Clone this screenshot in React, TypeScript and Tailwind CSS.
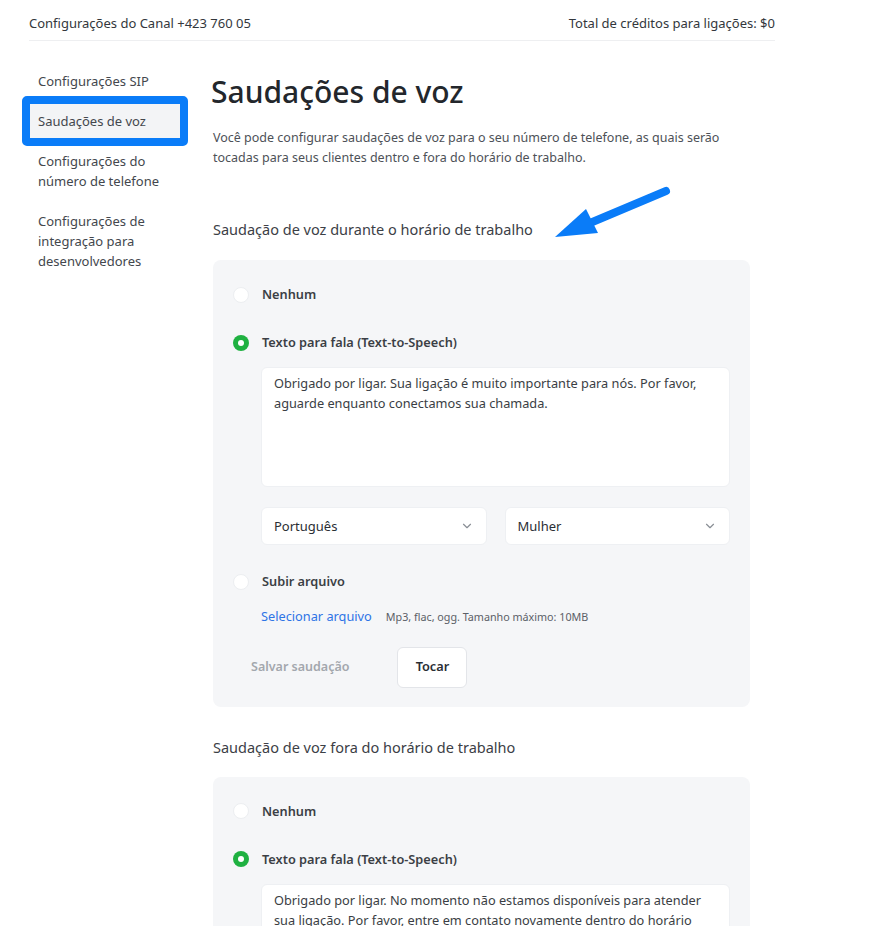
import { ChevronDown } from "lucide-react";

const font = { fontFamily: '"Noto Sans", "Open Sans", sans-serif' };

function Radio({ checked }: { checked?: boolean }) {
  return checked ? (
    <span className="flex h-4 w-4 items-center justify-center rounded-full bg-[#1fb141]">
      <span className="h-1.5 w-1.5 rounded-full bg-white" />
    </span>
  ) : (
    <span className="h-4 w-4 rounded-full border border-[#eceef1] bg-white" />
  );
}

function Option({ checked, label }: { checked?: boolean; label: string }) {
  return (
    <div className="flex items-center gap-[13px]">
      <Radio checked={checked} />
      <span className="text-[12.75px] font-semibold text-[#3b3f45]">{label}</span>
    </div>
  );
}

function Select({ value }: { value: string }) {
  return (
    <div className="flex h-[38px] flex-1 items-center justify-between rounded-md border border-[#eef0f3] bg-white pl-3 pr-3">
      <span className="text-[13px] text-[#2a2e34]">{value}</span>
      <ChevronDown className="h-3.5 w-3.5 text-[#8a8f96]" strokeWidth={2} />
    </div>
  );
}

function GreetingCard({ text, full }: { text: string; full?: boolean }) {
  return (
    <div className="rounded-lg bg-[#f5f6f8] px-5 pt-[25px] pb-[19px]">
      <Option label="Nenhum" />
      <div className="mt-[29px]">
        <Option checked label="Texto para fala (Text-to-Speech)" />
      </div>
      <div className="ml-[28px] mt-[15px]">
        <div className="h-[120px] rounded-md border border-[#eef0f3] bg-white pl-3 pr-6 pt-[5px] text-[12.75px] leading-[20px] text-[#3a3e44]">
          {text}
        </div>
        {full && (
          <div className="mt-[20px] flex gap-[18px]">
            <Select value="Português" />
            <Select value="Mulher" />
          </div>
        )}
      </div>
      {full && (
        <>
          <div className="mt-[27px]">
            <Option label="Subir arquivo" />
          </div>
          <div className="ml-[28px] mt-[16px] flex items-center gap-[14px]">
            <span className="text-[12.75px] text-[#2e74e6]">Selecionar arquivo</span>
            <span className="text-[10.75px] text-[#5b6067]">
              Mp3, flac, ogg. Tamanho máximo: 10MB
            </span>
          </div>
          <div className="mt-[20px] flex items-center gap-[48px] pl-[18px]">
            <span className="text-[12.5px] font-semibold text-[#a3a7ad]">
              Salvar saudação
            </span>
            <button className="h-[41px] w-[70px] rounded-md border border-[#e3e5e9] bg-white text-[12.75px] font-semibold text-[#2a2e34]">
              Tocar
            </button>
          </div>
        </>
      )}
    </div>
  );
}

export default function App() {
  return (
    <div className="relative h-[926px] overflow-hidden bg-white" style={font}>
      <div className="ml-[29px] w-[746px]">
        <div className="flex h-[41px] items-center justify-between border-b border-[#eeeff1] pt-[8px] text-[13px] text-[#33373c]">
          <span>Configurações do Canal +423 760 05</span>
          <span>Total de créditos para ligações: $0</span>
        </div>
      </div>

      <div className="mt-[30px] flex">
        <nav className="ml-[22px] w-[166px] text-[13px] leading-[20px] text-[#43474d]">
          <div className="px-4">Configurações SIP</div>
          <div className="mt-[5px] rounded-[5px] border-[8px] border-[#0a7cf8] bg-[#f3f4f6] px-2 py-[7px]">
            Saudações de voz
          </div>
          <div className="mt-[5px] px-4">
            Configurações do
            <br />
            número de telefone
          </div>
          <div className="mt-[20px] px-4">
            Configurações de
            <br />
            integração para
            <br />
            desenvolvedores
          </div>
        </nav>

        <main className="ml-[23px] w-[539px]">
          <h1 className="mt-[1px] text-[30px] font-medium leading-[40px] text-[#23272c]">
            Saudações de voz
          </h1>
          <p className="mt-[16px] max-w-[530px] pl-[2px] text-[12.5px] leading-[20px] text-[#4d5157]">
            Você pode configurar saudações de voz para o seu número de telefone, as quais serão
            tocadas para seus clientes dentro e fora do horário de trabalho.
          </p>
          <h2 className="mt-[50px] pl-[2px] text-[14.5px] leading-[22px] text-[#3c4046]">
            Saudação de voz durante o horário de trabalho
          </h2>
          <div className="mt-[20px] pl-[2px]">
            <GreetingCard
              full
              text="Obrigado por ligar. Sua ligação é muito importante para nós. Por favor, aguarde enquanto conectamos sua chamada."
            />
          </div>
          <h2 className="mt-[29px] pl-[2px] text-[14.5px] leading-[22px] text-[#3c4046]">
            Saudação de voz fora do horário de trabalho
          </h2>
          <div className="mt-[19px] pl-[2px]">
            <GreetingCard text="Obrigado por ligar. No momento não estamos disponíveis para atender sua ligação. Por favor, entre em contato novamente dentro do horário de trabalho." />
          </div>
        </main>
      </div>

      <svg
        className="absolute left-[550px] top-[182px]"
        width="125"
        height="62"
        viewBox="0 0 125 62"
      >
        <line x1="116" y1="9" x2="40" y2="41" stroke="#0a7cf8" strokeWidth="8" strokeLinecap="round" />
        <polygon points="5,55 36,27 48,51" fill="#0a7cf8" />
      </svg>
    </div>
  );
}
